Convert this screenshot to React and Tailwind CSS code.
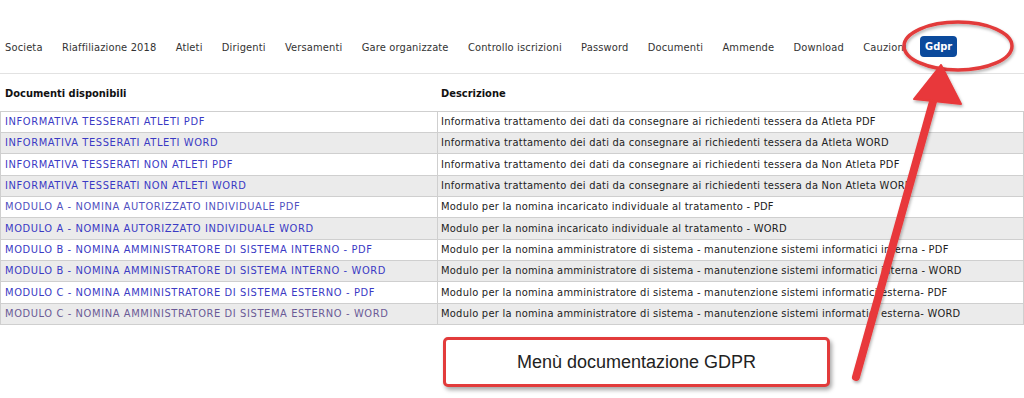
import React from "react";

const nav = [
  "Societa",
  "Riaffiliazione 2018",
  "Atleti",
  "Dirigenti",
  "Versamenti",
  "Gare organizzate",
  "Controllo iscrizioni",
  "Password",
  "Documenti",
  "Ammende",
  "Download",
  "Cauzioni",
];

const rows = [
  ["INFORMATIVA TESSERATI ATLETI PDF", "Informativa trattamento dei dati da consegnare ai richiedenti tessera da Atleta PDF"],
  ["INFORMATIVA TESSERATI ATLETI WORD", "Informativa trattamento dei dati da consegnare ai richiedenti tessera da Atleta WORD"],
  ["INFORMATIVA TESSERATI NON ATLETI PDF", "Informativa trattamento dei dati da consegnare ai richiedenti tessera da Non Atleta PDF"],
  ["INFORMATIVA TESSERATI NON ATLETI WORD", "Informativa trattamento dei dati da consegnare ai richiedenti tessera da Non Atleta WORD"],
  ["MODULO A - NOMINA AUTORIZZATO INDIVIDUALE PDF", "Modulo per la nomina incaricato individuale al tratamento - PDF"],
  ["MODULO A - NOMINA AUTORIZZATO INDIVIDUALE WORD", "Modulo per la nomina incaricato individuale al tratamento - WORD"],
  ["MODULO B - NOMINA AMMINISTRATORE DI SISTEMA INTERNO - PDF", "Modulo per la nomina amministratore di sistema - manutenzione sistemi informatici interna - PDF"],
  ["MODULO B - NOMINA AMMINISTRATORE DI SISTEMA INTERNO - WORD", "Modulo per la nomina amministratore di sistema - manutenzione sistemi informatici interna - WORD"],
  ["MODULO C - NOMINA AMMINISTRATORE DI SISTEMA ESTERNO - PDF", "Modulo per la nomina amministratore di sistema - manutenzione sistemi informatici esterna- PDF"],
  ["MODULO C - NOMINA AMMINISTRATORE DI SISTEMA ESTERNO - WORD", "Modulo per la nomina amministratore di sistema - manutenzione sistemi informatici esterna- WORD"],
];

export default function App() {
  return (
    <div
      className="relative w-[1024px] h-[398px] overflow-hidden bg-white text-[11px] text-[#333]"
      style={{ fontFamily: '"DejaVu Sans Condensed", "DejaVu Sans", sans-serif' }}
    >
      <nav className="h-[74px] border-b border-[#e2e2e2] flex items-start pt-[38px] pl-[5px] gap-[19.3px]">
        {nav.map((n) => (
          <span key={n} className="leading-[20px] whitespace-nowrap tracking-[0.15px]">{n}</span>
        ))}
        <span className="ml-[-6px] mt-[-2px] h-[21px] px-[5px] rounded-[4px] bg-[#0b4a9c] text-white font-bold leading-[21px] text-[11px]">
          Gdpr
        </span>
      </nav>

      <div className="flex h-[37px] items-center font-bold text-[#111] pt-[4px]">
        <div className="w-[437px] pl-[5px]">Documenti disponibili</div>
        <div className="pl-[4px]">Descrizione</div>
      </div>

      <table className="w-full border-collapse">
        <tbody>
          {rows.map(([a, b], i) => (
            <tr key={a} className={i % 2 === 1 ? "bg-[#ebebeb]" : "bg-white"}>
              <td
                className={`w-[437px] ${i % 3 === 2 ? "h-[22px]" : "h-[21px]"} border border-[#cfcfcf] pl-[4px] py-0 leading-[20px] whitespace-nowrap tracking-[0.6px] ${
                  i === 9 ? "text-[#6a5a96]" : i === 4 ? "text-[#5050c0]" : "text-[#3a3ac4]"
                }`}
              >
                {a}
              </td>
              <td className="border border-[#cfcfcf] pl-[3px] py-0 leading-[20px] text-[#222] whitespace-nowrap tracking-[0.25px]">
                {b}
              </td>
            </tr>
          ))}
        </tbody>
      </table>

      <div className="ml-[443px] mt-[12px] w-[387px] h-[50px] rounded-[5px] border-[3px] border-[#e23b3b] bg-white shadow-[2px_3px_4px_rgba(0,0,0,0.35)] flex items-center justify-center">
        <span
          className="text-[18px] text-[#222]"
          style={{ fontFamily: '"Liberation Sans", Arial, sans-serif' }}
        >
          Menù documentazione GDPR
        </span>
      </div>

      <svg className="absolute left-0 top-0 pointer-events-none" width="1024" height="398" viewBox="0 0 1024 398">
        <defs>
          <filter id="sh" x="-20%" y="-20%" width="140%" height="140%">
            <feDropShadow dx="1" dy="2" stdDeviation="1.5" floodColor="#000" floodOpacity="0.3" />
          </filter>
        </defs>
        <ellipse cx="958" cy="46" rx="54" ry="24" fill="none" stroke="#e23b3b" strokeWidth="3.5" filter="url(#sh)" />
        <g filter="url(#sh)" fill="#e8393a" stroke="#e8393a">
          <line x1="856" y1="377" x2="934" y2="98" strokeWidth="8" strokeLinecap="round" />
          <polygon points="941,65 914,99 961,104" strokeWidth="2" strokeLinejoin="round" />
        </g>
      </svg>
    </div>
  );
}
